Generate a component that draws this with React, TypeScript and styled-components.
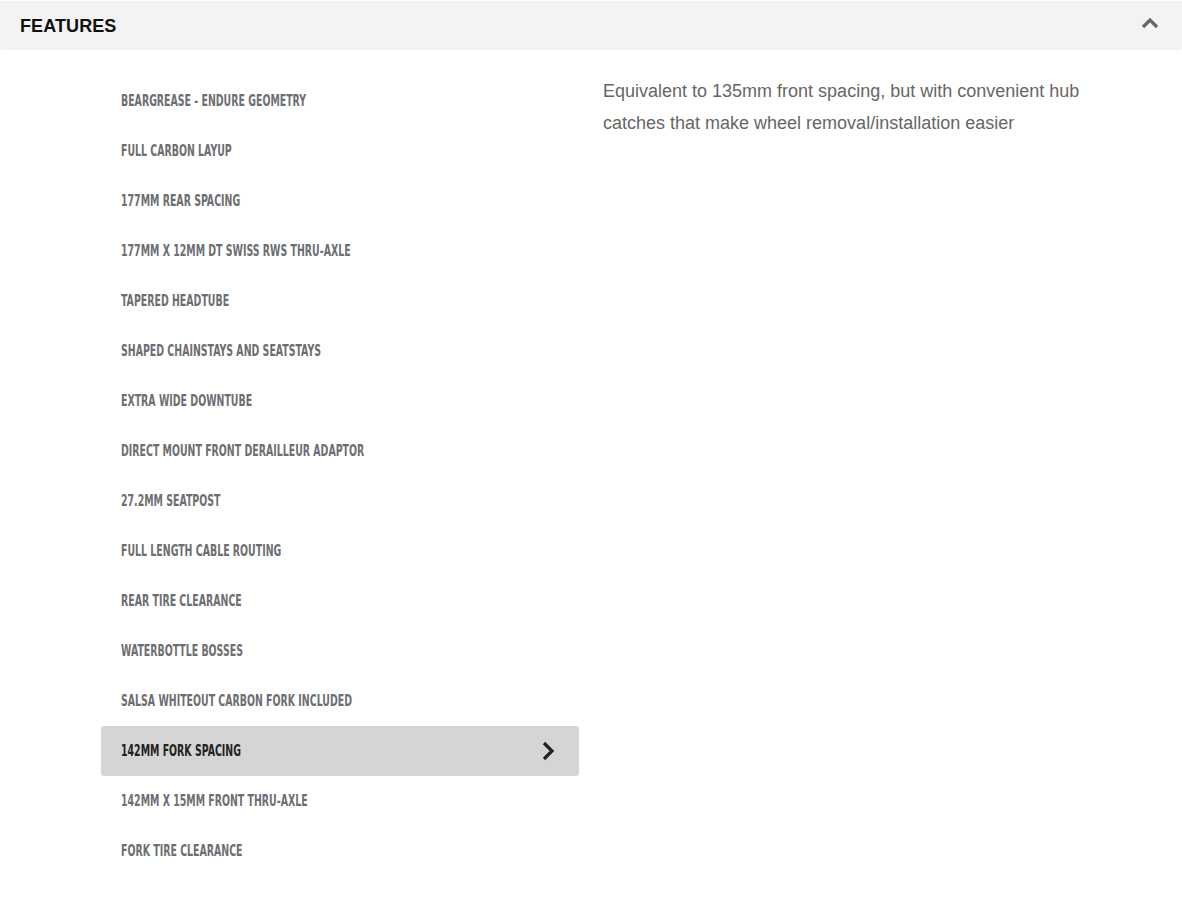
import React, { useState } from 'react';
import styled, { createGlobalStyle } from 'styled-components';

const GlobalStyle = createGlobalStyle`
  html, body {
    margin: 0;
    padding: 0;
    background: #fff;
  }
  body {
    font-family: 'Liberation Sans', Arial, sans-serif;
  }
`;

const Section = styled.section`
  width: 1182px;
  padding-top: 1px;
`;

const Header = styled.div`
  height: 49px;
  background: #f3f3f3;
  border-radius: 0 0 3px 3px;
  display: flex;
  align-items: center;
  justify-content: space-between;
  padding: 0 23px 0 20px;
`;

const Title = styled.h3`
  margin: 0;
  font-family: 'Liberation Sans', Arial, sans-serif;
  font-weight: bold;
  font-size: 18px;
  letter-spacing: 0.1px;
  color: #111;
  padding-top: 1px;
`;

const Toggle = styled.span`
  display: flex;
  margin-top: -6px;
`;

const Body = styled.div`
  display: grid;
  grid-template-columns: 478px 1fr;
  column-gap: 24px;
  padding: 26px 90px 24px 101px;
`;

const List = styled.ul`
  list-style: none;
  margin: 0;
  padding: 0;
`;

const Item = styled.li<{ $active?: boolean }>`
  height: 50px;
  display: flex;
  align-items: center;
  justify-content: space-between;
  padding: 0 24px 0 20px;
  border-radius: 3px;
  background: ${p => (p.$active ? '#d5d5d5' : 'transparent')};
  color: ${p => (p.$active ? '#222' : '#6d6e71')};
  cursor: pointer;
`;

const Label = styled.span`
  display: inline-block;
  font-family: 'Liberation Sans Narrow', 'DejaVu Sans Condensed', sans-serif;
  font-weight: bold;
  font-size: 15.5px;
  text-transform: uppercase;
  transform: scaleX(0.675);
  transform-origin: left center;
  white-space: nowrap;
`;

const Description = styled.p`
  margin: 0;
  margin-top: -1px;
  font-family: 'Liberation Sans', Arial, sans-serif;
  font-size: 18px;
  line-height: 32px;
  color: #666;
`;

const features = [
  'Beargrease - Endure Geometry',
  'Full Carbon Layup',
  '177mm Rear Spacing',
  '177mm x 12mm DT Swiss RWS Thru-Axle',
  'Tapered Headtube',
  'Shaped Chainstays and Seatstays',
  'Extra Wide Downtube',
  'Direct Mount Front Derailleur Adaptor',
  '27.2mm Seatpost',
  'Full Length Cable Routing',
  'Rear Tire Clearance',
  'Waterbottle Bosses',
  'Salsa Whiteout Carbon Fork Included',
  '142mm Fork Spacing',
  '142mm x 15mm Front Thru-Axle',
  'Fork Tire Clearance',
];

const ChevronUp = () => (
  <svg width="18" height="12" viewBox="0 0 18 12">
    <path d="M2 10 L9 3 L16 10" fill="none" stroke="#666" strokeWidth="3.2" />
  </svg>
);

const ChevronRight = () => (
  <svg width="14" height="20" viewBox="0 0 14 20">
    <path d="M3 2 L11 10 L3 18" fill="none" stroke="#222" strokeWidth="3.2" />
  </svg>
);

export default function App() {
  const [active, setActive] = useState(13);

  return (
    <>
      <GlobalStyle />
      <Section>
        <Header>
          <Title>FEATURES</Title>
          <Toggle>
            <ChevronUp />
          </Toggle>
        </Header>
        <Body>
          <List>
            {features.map((f, i) => (
              <Item key={f} $active={i === active} onClick={() => setActive(i)}>
                <Label>{f}</Label>
                {i === active && <ChevronRight />}
              </Item>
            ))}
          </List>
          <Description>
            Equivalent to 135mm front spacing, but with convenient hub catches that make wheel
            removal/installation easier
          </Description>
        </Body>
      </Section>
    </>
  );
}
